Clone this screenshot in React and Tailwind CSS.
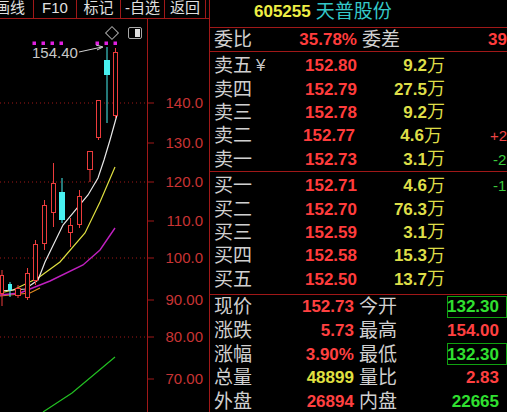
import React from 'react';

const FONT = { fontFamily: "'Liberation Sans','Noto Sans CJK SC',sans-serif" };

const candles = [
  { x: 113, w: 5, o: 52, c: 115, h: 48, l: 118, up: true },
  { x: 104, w: 6, o: 60, c: 74, h: 47, l: 123, up: false },
  { x: 96, w: 5, o: 100, c: 137, h: 100, l: 140, up: true },
  { x: 87, w: 6, o: 151, c: 169, h: 151, l: 182, up: true },
  { x: 77, w: 5, o: 196, c: 224, h: 190, l: 228, up: true },
  { x: 68, w: 5, o: 225, c: 232, h: 218, l: 247, up: true },
  { x: 59, w: 6, o: 192, c: 219, h: 178, l: 223, up: false },
  { x: 51, w: 5, o: 183, c: 212, h: 163, l: 227, up: true },
  { x: 42, w: 5, o: 205, c: 243, h: 200, l: 250, up: true },
  { x: 33, w: 5, o: 244, c: 280, h: 240, l: 285, up: true },
  { x: 25, w: 5, o: 273, c: 297, h: 268, l: 300, up: true },
  { x: 15, w: 6, o: 288, c: 295, h: 285, l: 298, up: true },
  { x: 8, w: 4, o: 284, c: 289, h: 282, l: 297, up: false },
  { x: 0, w: 4, o: 275, c: 293, h: 270, l: 306, up: true },
];

const axis = [
  ['140.0', 103, true],
  ['130.0', 143, false],
  ['120.0', 182, true],
  ['110.0', 221, false],
  ['100.0', 258, true],
  ['90.00', 300, false],
  ['80.00', 337, true],
  ['70.00', 379, false],
  ['60.00', 418, false],
];

const pts = (a) => a.map((p) => p.join(',')).join(' ');

const Chart = () => (
  <svg width="209" height="393" viewBox="0 19 209 393" className="block">
    {axis.map(([t, y, dot]) => (
      <g key={t}>
        {dot && <line x1="0" y1={y} x2="147" y2={y} stroke="#a01818" strokeDasharray="1 3" />}
        <line x1="147" y1={y} x2="154" y2={y} stroke="#a01818" />
        <text x="203" y={y + 5} textAnchor="end" fontSize="15" fill="#c83434" style={FONT}>{t}</text>
      </g>
    ))}
    <line x1="147.5" y1="19" x2="147.5" y2="412" stroke="#a01818" />

    {/* 均线 */}
    <polyline fill="none" stroke="#22c022" strokeWidth="1.2" points={pts([[43, 412], [72, 393], [115, 357]])} />
    <polyline fill="none" stroke="#e08a20" strokeWidth="1.2" points={pts([[0, 296], [30, 293], [40, 288]])} />
    <polyline fill="none" stroke="#c020c0" strokeWidth="1.4" points={pts([[0, 295], [20, 293], [50, 281], [83, 265], [100, 250], [115, 228]])} />
    <polyline fill="none" stroke="#e0e040" strokeWidth="1.2" points={pts([[0, 293], [13, 290], [38, 278], [60, 262], [85, 233], [100, 202], [115, 167]])} />
    <polyline fill="none" stroke="#e8e8e8" strokeWidth="1.2" points={pts([[0, 291], [25, 289], [38, 280], [45, 262], [63, 225], [88, 195], [98, 178], [104, 160], [110, 140], [117, 115]])} />

    {candles.map((k, i) => {
      const col = k.up ? '#ec3c3c' : '#48f0f0';
      const cx = k.x + k.w / 2;
      return (
        <g key={i}>
          <line x1={cx} y1={k.h} x2={cx} y2={k.o} stroke={col} />
          <line x1={cx} y1={k.c} x2={cx} y2={k.l} stroke={col} />
          <rect
            x={k.x + 0.5}
            y={k.o + 0.5}
            width={k.w - 1}
            height={k.c - k.o}
            fill={k.up ? '#000' : col}
            stroke={col}
          />
        </g>
      );
    })}

    {[34, 43, 52, 61, 97, 106, 115].map((x) => (
      <rect key={x} x={x - 1.5} y="41.5" width="3.5" height="3.5" fill="#e020e0" />
    ))}
    <text x="32" y="58" fontSize="15" fill="#c8c8c8" style={FONT}>154.40</text>
    <line x1="79" y1="52" x2="102" y2="47" stroke="#d0d0d0" />
    <polyline fill="none" stroke="#d0d0d0" points="96,45 103,47 97,50" />

    <rect x="107.5" y="28.5" width="9" height="9" fill="none" stroke="#a8a8a8" transform="rotate(45 112 33)" />
    <rect x="128.5" y="27.5" width="13" height="11" rx="1.5" fill="none" stroke="#a8a8a8" />
    <rect x="135" y="29" width="5" height="8" fill="#e0e0e0" />
  </svg>
);

const tabs = [
  ['画线', 'w-[34px] justify-end pr-[8px]'],
  ['F10', 'w-[43px] justify-center'],
  ['标记', 'w-[44px] justify-center'],
  ['-自选', 'w-[44px] justify-center'],
  ['返回', 'w-[41px] justify-center'],
];

const sells = [
  ['卖五', '152.80', '9.2', null],
  ['卖四', '152.79', '27.5', null],
  ['卖三', '152.78', '9.2', null],
  ['卖二', '152.77', '4.6', ['+2', 'text-[#ee4444]']],
  ['卖一', '152.73', '3.1', ['-2', 'text-[#3cc83c]']],
];

const buys = [
  ['买一', '152.71', '4.6', ['-1', 'text-[#3cc83c]']],
  ['买二', '152.70', '76.3', null],
  ['买三', '152.59', '3.1', null],
  ['买四', '152.58', '15.3', null],
  ['买五', '152.50', '13.7', null],
];

const bottom = [
  ['现价', '152.73', 'text-[#ff4040]', '今开', '132.30', 'text-[#30e030]', true],
  ['涨跌', '5.73', 'text-[#ff4040]', '最高', '154.00', 'text-[#ff4040]', false],
  ['涨幅', '3.90%', 'text-[#ff4040]', '最低', '132.30', 'text-[#30e030]', true],
  ['总量', '48899', 'text-[#e0e040]', '量比', '2.83', 'text-[#ff4040]', false],
  ['外盘', '26894', 'text-[#ff4040]', '内盘', '22665', 'text-[#30e030]', false],
];

const QuoteRow = ({ label, price, vol, extra, yen }) => (
  <div className="h-[23.4px] flex items-center whitespace-nowrap">
    <span className="w-[64px] pl-[4px] text-[19px] text-[#d0d0d0] flex items-center">
      {label}
      {yen && <span className="ml-[4px] text-[17px] text-[#c8c8c8]">¥</span>}
    </span>
    <span className="w-[83px] text-right text-[17px] font-bold text-[#ff3c3c]">{price}</span>
    <span className="w-[88px] text-right text-[#dede48] flex items-center justify-end">
      <span className="text-[17px] font-bold">{vol}</span>
      <span className="text-[18px]">万</span>
    </span>
    {extra && <span className={`ml-[48px] text-[15px] ${extra[1]}`}>{extra[0]}</span>}
  </div>
);

export default function App() {
  return (
    <div className="w-[507px] h-[412px] bg-black overflow-hidden flex leading-none" style={FONT}>
      <div className="w-[210px] h-full flex flex-col border-r border-[#a01818] shrink-0">
        <div className="h-[19px] flex border-b border-[#a01818]">
          {tabs.map(([t, cls]) => (
            <div key={t} className={`${cls} h-full flex items-start border-r border-[#a01818] overflow-hidden text-[15px] text-[#e0e0e0] whitespace-nowrap`}>
              <span className="leading-[15px]">{t}</span>
            </div>
          ))}
        </div>
        <Chart />
      </div>

      <div className="flex-1 h-full flex flex-col overflow-hidden">
        <div className="h-[28px] shrink-0 border-b border-[#a01818] flex items-center pb-[4px] whitespace-nowrap">
          <span className="ml-[44px] text-[17px] font-bold text-[#eeee44]">605255</span>
          <span className="ml-[5px] text-[19px] text-[#34c8c8]">天普股份</span>
        </div>

        <div className="h-[24px] shrink-0 border-b border-[#a01818] flex items-center whitespace-nowrap">
          <span className="w-[64px] pl-[4px] text-[19px] text-[#d0d0d0]">委比</span>
          <span className="w-[83px] text-right text-[17px] font-bold text-[#ff3c3c]">35.78%</span>
          <span className="w-[131px] pl-[5px] text-[19px] text-[#d0d0d0]">委差</span>
          <span className="text-[17px] font-bold text-[#ff3c3c]">39</span>
        </div>

        <div className="h-[120px] shrink-0 pt-[2px] border-b border-[#a01818]">
          {sells.map(([l, p, v, e], i) => (
            <QuoteRow key={l} label={l} price={p} vol={v} extra={e} yen={i === 0} />
          ))}
        </div>

        <div className="h-[123px] shrink-0 pt-[2px] border-b border-[#a01818]">
          {buys.map(([l, p, v, e]) => (
            <QuoteRow key={l} label={l} price={p} vol={v} extra={e} />
          ))}
        </div>

        <div className="flex flex-col">
          {bottom.map(([l, v, vc, l2, v2, v2c, boxed]) => (
            <div key={l} className="h-[23.7px] shrink-0 flex items-center whitespace-nowrap">
              <span className="w-[64px] pl-[4px] text-[19px] text-[#d0d0d0]">{l}</span>
              <span className={`w-[83px] text-right text-[17px] font-bold ${vc}`}>{v}</span>
              <span className="w-[95px] pl-[5px] text-[19px] text-[#d0d0d0]">{l2}</span>
              <span
                className={`w-[60px] shrink-0 h-[22px] flex items-center justify-end pr-[7px] border text-[17px] font-bold ${
                  boxed ? 'border-[#10a010]' : 'border-transparent'
                } ${v2c}`}
              >
                {v2}
              </span>
            </div>
          ))}
        </div>
      </div>
    </div>
  );
}
